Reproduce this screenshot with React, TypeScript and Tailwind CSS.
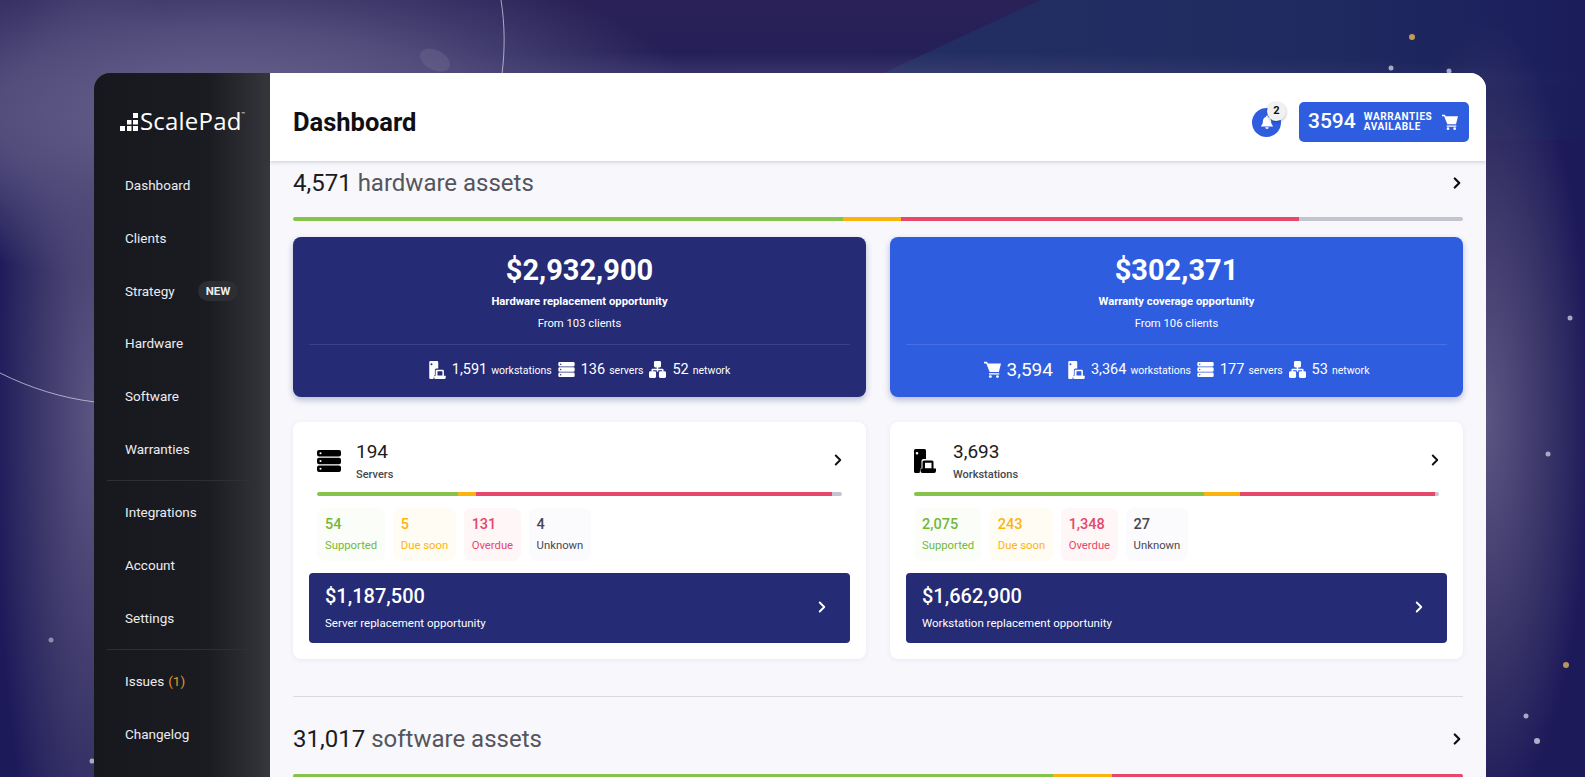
import React from 'react';
import { ChevronRight } from 'lucide-react';

const FONT = 'font-["Roboto","Liberation_Sans",sans-serif]';

const navGroups = [
  ['Dashboard', 'Clients', 'Strategy', 'Hardware', 'Software', 'Warranties'],
  ['Integrations', 'Account', 'Settings'],
  ['Issues', 'Changelog'],
];

const dots = [
  { x: 1412, y: 37, r: 3, c: '#c29a5a' },
  { x: 1391, y: 68, r: 2.5, c: '#a9a8c4' },
  { x: 1449, y: 71, r: 2.5, c: '#a9a8c4' },
  { x: 1570, y: 318, r: 2.5, c: '#a9a8c4' },
  { x: 1548, y: 454, r: 2.5, c: '#a9a8c4' },
  { x: 1566, y: 665, r: 3, c: '#b8965f' },
  { x: 1526, y: 716, r: 2.5, c: '#a9a8c4' },
  { x: 1537, y: 741, r: 3, c: '#b0afc8' },
  { x: 51, y: 640, r: 2.5, c: '#8d8ba8' },
  { x: 92, y: 761, r: 2.5, c: '#a9a8c4' },
];

function ServerIcon({ className }: { className?: string }) {
  return (
    <svg viewBox="0 0 24 22" className={className} fill="currentColor" fillRule="evenodd">
      <path d="M2 0h20a2 2 0 0 1 2 2v2.5a2 2 0 0 1-2 2H2a2 2 0 0 1-2-2V2a2 2 0 0 1 2-2zm1.5 2.2a1 1 0 1 0 0 2.1 1 1 0 0 0 0-2.1z" />
      <path d="M2 7.7h20a2 2 0 0 1 2 2v2.6a2 2 0 0 1-2 2H2a2 2 0 0 1-2-2V9.7a2 2 0 0 1 2-2zM3.5 10a1 1 0 1 0 0 2.1 1 1 0 0 0 0-2.1z" />
      <path d="M2 15.5h20a2 2 0 0 1 2 2V20a2 2 0 0 1-2 2H2a2 2 0 0 1-2-2v-2.500a2 2 0 0 1 2-2zm1.500 2.200a1 1 0 1 0 0 2.100 1 1 0 0 0 0-2.100z" />
    </svg>
  );
}

function WorkstationIcon({ className }: { className?: string }) {
  return (
    <svg viewBox="0 0 22 24" className={className} fill="currentColor" fillRule="evenodd">
      <path d="M1.500 0h9A1.500 1.500 0 0 1 12 1.500V10H9.500a2 2 0 0 0-2 2v7H6.700L5.500 24h-4A1.500 1.500 0 0 1 0 22.500v-21A1.500 1.500 0 0 1 1.500 0zM3 3a1.300 1.300 0 1 0 0 2.600A1.300 1.300 0 0 0 3 3z" />
      <path d="M10 11.500h8a1.500 1.500 0 0 1 1.500 1.500v6.500H22V22a2 2 0 0 1-2 2H8.500a2 2 0 0 1-2-2v-2.500h2V13a1.500 1.500 0 0 1 1.500-1.500zm1 2.300v5.400h6.500v-5.400z" />
    </svg>
  );
}

function NetworkIcon({ className }: { className?: string }) {
  return (
    <svg viewBox="0 0 24 24" className={className} fill="currentColor">
      <rect x="7" y="0" width="10" height="9" rx="2" />
      <path d="M11 8h2v3h6a1.500 1.500 0 0 1 1.500 1.500V15h-2v-2H13v2h-2v-2H5.500v2h-2v-2.500A1.500 1.500 0 0 1 5 11h6z" />
      <rect x="0" y="14.500" width="10" height="9.500" rx="2" />
      <rect x="14" y="14.500" width="10" height="9.500" rx="2" />
    </svg>
  );
}

function CartIcon({ className }: { className?: string }) {
  return (
    <svg viewBox="0 0 24 24" className={className} fill="currentColor">
      <path d="M0 1h4.500l.8 2.500H24l-3 12H8L3.200 3.500H0z" />
      <path d="M7 17.200h14.500v1.900H7z" />
      <circle cx="9" cy="22" r="2" />
      <circle cx="19" cy="22" r="2" />
    </svg>
  );
}

function BellIcon({ className }: { className?: string }) {
  return (
    <svg viewBox="0 0 24 24" className={className} fill="currentColor">
      <path d="M12 1a1.800 1.800 0 0 1 1.800 1.800v.6c3.300.8 5.200 3.500 5.200 7 0 4.300 1 6 3 8v1.100H2v-1.100c2-2 3-3.700 3-8 0-3.500 1.900-6.200 5.200-7v-.6A1.800 1.800 0 0 1 12 1z" />
      <path d="M9 21h6a3 3 0 0 1-6 0z" />
    </svg>
  );
}

function Logo() {
  return (
    <div className="flex items-end pl-[26px]">
      <svg viewBox="0 0 18 18" className="mb-[3px] h-[18px] w-[18px]" fill="#fff">
        <rect x="0" y="13" width="5" height="5" />
        <rect x="7" y="7" width="4.500" height="4.500" />
        <rect x="7" y="13" width="4.500" height="5" />
        <rect x="13" y="0" width="5" height="5" />
        <rect x="13" y="7" width="5" height="4.500" />
        <rect x="13" y="13" width="5" height="5" />
      </svg>
      <span className='ml-[2px] font-["Open_Sans",sans-serif] text-[24px] leading-[26px] font-medium tracking-[0.2px] text-white'>ScalePad</span>
      <span className="mb-[17px] text-[6px] leading-[6px] text-white">™</span>
    </div>
  );
}

function Sidebar() {
  return (
    <aside className="flex w-[176px] shrink-0 flex-col bg-gradient-to-r from-[#17181e] via-[#1b1c22] via-65% to-[#36373c] text-[#ececf0]">
      <div className="flex h-[86px] items-center pt-[9px]">
        <Logo />
      </div>
      {navGroups.map((group, i) => (
        <div key={i}>
          {i === 1 && <div className="mx-[13px] mt-[5px] mb-[5px] h-px bg-[#2e2f35]" />}
          {i === 2 && <div className="mx-[13px] my-[5px] h-px bg-[#2e2f35]" />}
          {group.map((item) => (
            <div key={item} className="flex h-[52.700px] items-center pl-[31px] text-[13.500px]">
              <span>{item}</span>
              {item === 'Strategy' && (
                <span className="ml-[23px] rounded-full bg-[#2d2e34] px-[8px] py-[3px] text-[11.500px] leading-[14px] font-bold">NEW</span>
              )}
              {item === 'Issues' && <span className="ml-[4px] text-[#e09a2b]">(1)</span>}
            </div>
          ))}
        </div>
      ))}
    </aside>
  );
}

function Header() {
  return (
    <header className="relative z-10 flex h-[88px] items-center justify-between pt-[10px] pr-[17px] pl-[23px] bg-white shadow-[0_1px_4px_rgba(40,40,70,0.22)]">
      <h1 className="text-[25.500px] font-bold text-[#101014]">Dashboard</h1>
      <div className="flex items-center gap-[18px]">
        <div className="relative flex size-[29px] items-center justify-center rounded-full bg-[#2f5de0] text-white">
          <BellIcon className="size-[14px]" />
          <span className="absolute -top-[6px] -right-[5px] flex size-[19px] items-center justify-center rounded-full bg-[#f1f1f4] text-[11px] font-bold text-[#111] shadow-[0_1px_3px_rgba(0,0,0,0.3)]">2</span>
        </div>
        <div className="flex h-[40px] w-[170px] items-center rounded-[5px] bg-[#2f5de0] pl-[9px] text-white">
          <span className="text-[21px] font-medium">3594</span>
          <span className="ml-[8px] text-[10px] leading-[10px] font-bold tracking-[0.6px]">WARRANTIES<br />AVAILABLE</span>
          <CartIcon className="ml-[10px] size-[16px]" />
        </div>
      </div>
    </header>
  );
}

function StackBar({ parts, className }: { parts: number[]; className?: string }) {
  const colors = ['bg-[#86c34b]', 'bg-[#fbb40f]', 'bg-[#e6476a]', 'bg-[#c2c4d0]'];
  const total = parts.reduce((a, b) => a + b, 0);
  return (
    <div className={`flex overflow-hidden rounded-full ${className ?? ''}`}>
      {parts.map((p, i) => (
        <div key={i} className={colors[i]} style={{ width: `${(p / total) * 100}%` }} />
      ))}
    </div>
  );
}

function SectionTitle({ count, label }: { count: string; label: string }) {
  return (
    <div className="flex h-[30px] items-center justify-between">
      <div className="text-[24px] leading-[30px] text-[#1b1b20]">
        {count} <span className="text-[#55555c]">{label}</span>
      </div>
      <ChevronRight className="mr-[-3px] size-[18px] text-[#111]" strokeWidth={3} />
    </div>
  );
}

function Stat({ n, label }: { n: string; label: string }) {
  return (
    <span className="flex items-baseline gap-[4px]">
      <span className="text-[14.500px]">{n}</span>
      <span className="text-[10.500px]">{label}</span>
    </span>
  );
}

function Opportunity({ amount, title, clients, bg, line, children }: { amount: string; title: string; clients: string; bg: string; line: string; children: React.ReactNode }) {
  return (
    <div className={`flex h-[160px] flex-col items-center rounded-[8px] px-[16px] pt-[14px] text-white shadow-[0_3px_6px_rgba(40,50,120,0.3)] ${bg}`}>
      <div className="text-[29px] leading-[38px] font-bold">{amount}</div>
      <div className="mt-[5px] text-[11.250px] leading-[16px] font-bold">{title}</div>
      <div className="mt-[6px] text-[11.250px] leading-[16px]">{clients}</div>
      <div className={`mt-[12px] h-px w-full ${line}`} />
      <div className="mt-[14px] flex items-center gap-[6px]">{children}</div>
    </div>
  );
}

function Tile({ n, label, text, bg }: { n: string; label: string; text: string; bg: string }) {
  return (
    <div className={`flex h-[53px] flex-col justify-center rounded-[8px] px-[8px] ${bg}`}>
      <div className={`text-[14.500px] leading-[20px] font-medium ${text}`}>{n}</div>
      <div className={`mt-[3px] text-[11.300px] leading-[16px] ${text}`}>{label}</div>
    </div>
  );
}

function AssetCard({ icon, count, name, parts, bar, amount, title }: { icon: React.ReactNode; count: string; name: string; parts: number[]; bar: number[]; amount: string; title: string }) {
  return (
    <div className="h-[237px] rounded-[8px] bg-white px-[16px] pt-[17px] shadow-[0_1px_5px_rgba(60,60,110,0.08)]">
      <div className="px-[8px]">
        <div className="flex items-center">
          <div className="flex w-[39px] text-black">{icon}</div>
          <div className="flex-1">
            <div className="text-[19px] leading-[26px] text-[#1b1b20]">{count}</div>
            <div className="mt-[2px] text-[11px] leading-[16px] font-medium text-[#47474d]">{name}</div>
          </div>
          <ChevronRight className="mr-[-5px] mb-[2px] size-[18px] text-[#111]" strokeWidth={2.500} />
        </div>
        <StackBar parts={bar} className="mt-[9px] h-[4px]" />
        <div className="mt-[12px] flex gap-[7.500px]">
          <Tile n={parts[0].toLocaleString('en-US')} label="Supported" text="text-[#74b83a]" bg="bg-[#fbfdf9]" />
          <Tile n={parts[1].toLocaleString('en-US')} label="Due soon" text="text-[#fbb40f]" bg="bg-[#fffcf4]" />
          <Tile n={parts[2].toLocaleString('en-US')} label="Overdue" text="text-[#e6476a]" bg="bg-[#fff6f8]" />
          <Tile n={parts[3].toLocaleString('en-US')} label="Unknown" text="text-[#47474d]" bg="bg-[#fbfbfe]" />
        </div>
      </div>
      <div className="mt-[12px] flex h-[70px] items-center justify-between rounded-[4px] bg-[#252b74] pr-[19px] pb-[2px] pl-[16px] text-white">
        <div>
          <div className="text-[20px] leading-[26px] font-medium">{amount}</div>
          <div className="mt-[6px] text-[11.500px] leading-[16px]">{title}</div>
        </div>
        <ChevronRight className="size-[18px]" strokeWidth={2.500} />
      </div>
    </div>
  );
}

export default function App() {
  return (
    <div className={`relative h-screen overflow-hidden bg-[#1d1a5a] ${FONT}`}>
      {/* backdrop art */}
      <svg className="absolute inset-0 h-full w-full" viewBox="0 0 1585 777">
        <defs>
          <linearGradient id="skyLeft" x1="0" y1="0" x2="0" y2="1">
            <stop offset="0" stopColor="#2a2257" />
            <stop offset="1" stopColor="#1d1a5a" />
          </linearGradient>
          <linearGradient id="skyRight" x1="0" y1="0" x2="1" y2="0">
            <stop offset="0" stopColor="#243063" />
            <stop offset="0.7" stopColor="#1f2a60" />
            <stop offset="1" stopColor="#1b1d5b" />
          </linearGradient>
          <radialGradient id="glowTop">
            <stop offset="0" stopColor="#6b6690" />
            <stop offset="0.5" stopColor="#524d7b" />
            <stop offset="1" stopColor="#524d7b" stopOpacity="0" />
          </radialGradient>
          <radialGradient id="glowSide">
            <stop offset="0" stopColor="#5a5582" />
            <stop offset="0.55" stopColor="#3c3769" />
            <stop offset="1" stopColor="#3c3769" stopOpacity="0" />
          </radialGradient>
          <radialGradient id="glowBand">
            <stop offset="0" stopColor="#5a5582" stopOpacity="0.45" />
            <stop offset="1" stopColor="#5a5582" stopOpacity="0" />
          </radialGradient>
        </defs>
        <polygon points="0,0 1040,0 740,140 0,140" fill="url(#skyLeft)" />
        <polygon points="740,140 1040,0 1585,0 1585,140" fill="url(#skyRight)" />
        <ellipse cx="94" cy="420" rx="100" ry="560" fill="url(#glowSide)" />
        <ellipse cx="1486" cy="420" rx="105" ry="400" fill="url(#glowSide)" />
        <ellipse cx="790" cy="78" rx="800" ry="26" fill="url(#glowBand)" />
        <ellipse cx="230" cy="115" rx="470" ry="170" fill="url(#glowTop)" />
        <ellipse cx="435" cy="60" rx="16" ry="10" fill="#7a769c" opacity="0.3" transform="rotate(28 435 60)" />
        <path d="M501 0C505 25 505 50 502 74" fill="none" stroke="#c9c7dc" strokeWidth="0.800" />
        <path d="M0 373C30 388 62 398 95 402" fill="none" stroke="#c9c7dc" strokeWidth="0.800" />
        {dots.map((d, i) => (
          <circle key={i} cx={d.x} cy={d.y} r={d.r} fill={d.c} />
        ))}
      </svg>

      <div className="relative ml-[94px] mt-[73px] flex h-[760px] w-[1392px] overflow-hidden rounded-t-[16px]">
        <Sidebar />
        <main className="flex-1 bg-[#f7f7fc]">
          <Header />
          <div className="px-[23px] pt-[7px]">
            <SectionTitle count="4,571" label="hardware assets" />
            <StackBar parts={[550, 58, 398, 164]} className="mt-[19px] h-[4px]" />
            <div className="mt-[16px] grid grid-cols-2 gap-[24px]">
              <Opportunity amount="$2,932,900" title="Hardware replacement opportunity" clients="From 103 clients" bg="bg-[#252b74]" line="bg-[#3a4186]">
                <WorkstationIcon className="h-[18px] w-[17px]" />
                <Stat n="1,591" label="workstations" />
                <ServerIcon className="h-[15px] w-[17px]" />
                <Stat n="136" label="servers" />
                <NetworkIcon className="size-[17px]" />
                <Stat n="52" label="network" />
              </Opportunity>
              <Opportunity amount="$302,371" title="Warranty coverage opportunity" clients="From 106 clients" bg="bg-[#2f5de0]" line="bg-[#4670e4]">
                <CartIcon className="size-[17px]" />
                <span className="mr-[9px] text-[19px] leading-[20px]">3,594</span>
                <WorkstationIcon className="h-[18px] w-[17px]" />
                <Stat n="3,364" label="workstations" />
                <ServerIcon className="h-[15px] w-[17px]" />
                <Stat n="177" label="servers" />
                <NetworkIcon className="size-[17px]" />
                <Stat n="53" label="network" />
              </Opportunity>
            </div>
            <div className="mt-[25px] grid grid-cols-2 gap-[24px]">
              <AssetCard icon={<ServerIcon className="h-[22px] w-[24px]" />} count="194" name="Servers" parts={[54, 5, 131, 4]} bar={[140, 17, 353, 10]} amount="$1,187,500" title="Server replacement opportunity" />
              <AssetCard icon={<WorkstationIcon className="h-[24px] w-[22px]" />} count="3,693" name="Workstations" parts={[2075, 243, 1348, 27]} bar={[287, 35, 193, 4]} amount="$1,662,900" title="Workstation replacement opportunity" />
            </div>
            <div className="mt-[37px] h-px bg-[#d9d9df]" />
            <div className="mt-[27px]">
              <SectionTitle count="31,017" label="software assets" />
            </div>
            <StackBar parts={[760, 59, 351]} className="mt-[20px] h-[4px]" />
          </div>
        </main>
      </div>
    </div>
  );
}
